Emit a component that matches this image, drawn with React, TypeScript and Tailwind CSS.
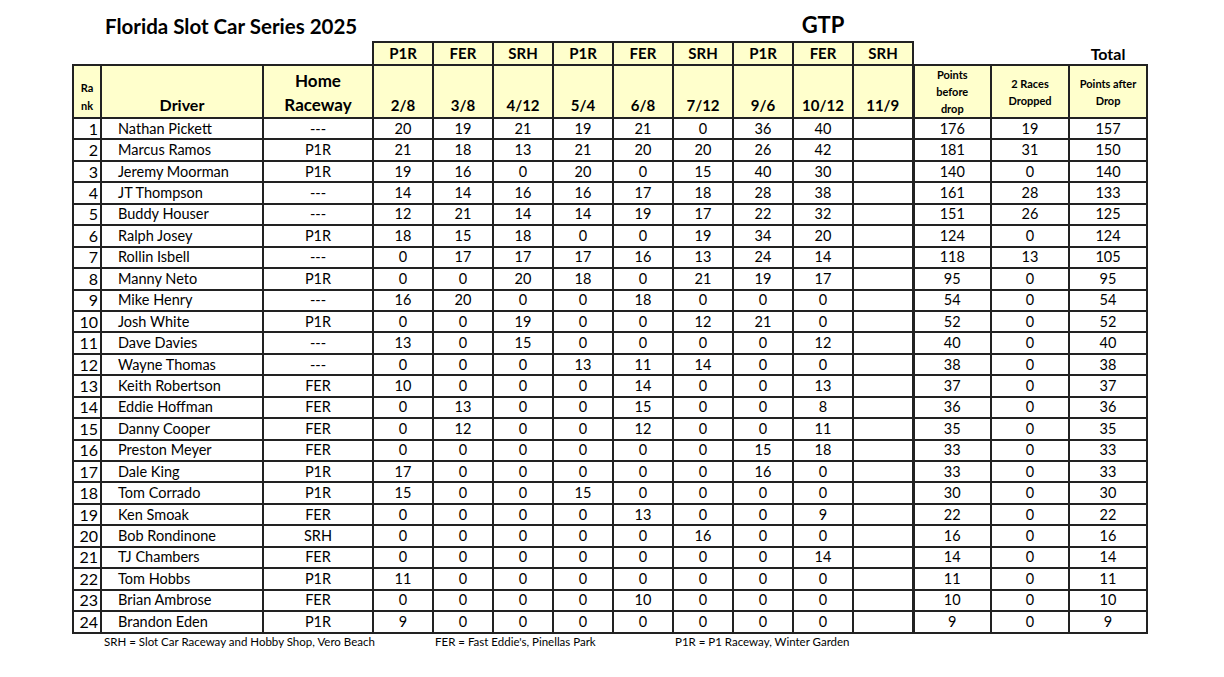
import React from "react";

type Row = [number, string, string, (number | null)[], number, number, number];

const rows: Row[] = [
  [1, "Nathan Pickett", "---", [20, 19, 21, 19, 21, 0, 36, 40, null], 176, 19, 157],
  [2, "Marcus Ramos", "P1R", [21, 18, 13, 21, 20, 20, 26, 42, null], 181, 31, 150],
  [3, "Jeremy Moorman", "P1R", [19, 16, 0, 20, 0, 15, 40, 30, null], 140, 0, 140],
  [4, "JT Thompson", "---", [14, 14, 16, 16, 17, 18, 28, 38, null], 161, 28, 133],
  [5, "Buddy Houser", "---", [12, 21, 14, 14, 19, 17, 22, 32, null], 151, 26, 125],
  [6, "Ralph Josey", "P1R", [18, 15, 18, 0, 0, 19, 34, 20, null], 124, 0, 124],
  [7, "Rollin Isbell", "---", [0, 17, 17, 17, 16, 13, 24, 14, null], 118, 13, 105],
  [8, "Manny Neto", "P1R", [0, 0, 20, 18, 0, 21, 19, 17, null], 95, 0, 95],
  [9, "Mike Henry", "---", [16, 20, 0, 0, 18, 0, 0, 0, null], 54, 0, 54],
  [10, "Josh White", "P1R", [0, 0, 19, 0, 0, 12, 21, 0, null], 52, 0, 52],
  [11, "Dave Davies", "---", [13, 0, 15, 0, 0, 0, 0, 12, null], 40, 0, 40],
  [12, "Wayne Thomas", "---", [0, 0, 0, 13, 11, 14, 0, 0, null], 38, 0, 38],
  [13, "Keith Robertson", "FER", [10, 0, 0, 0, 14, 0, 0, 13, null], 37, 0, 37],
  [14, "Eddie Hoffman", "FER", [0, 13, 0, 0, 15, 0, 0, 8, null], 36, 0, 36],
  [15, "Danny Cooper", "FER", [0, 12, 0, 0, 12, 0, 0, 11, null], 35, 0, 35],
  [16, "Preston Meyer", "FER", [0, 0, 0, 0, 0, 0, 15, 18, null], 33, 0, 33],
  [17, "Dale King", "P1R", [17, 0, 0, 0, 0, 0, 16, 0, null], 33, 0, 33],
  [18, "Tom Corrado", "P1R", [15, 0, 0, 15, 0, 0, 0, 0, null], 30, 0, 30],
  [19, "Ken Smoak", "FER", [0, 0, 0, 0, 13, 0, 0, 9, null], 22, 0, 22],
  [20, "Bob Rondinone", "SRH", [0, 0, 0, 0, 0, 16, 0, 0, null], 16, 0, 16],
  [21, "TJ Chambers", "FER", [0, 0, 0, 0, 0, 0, 0, 14, null], 14, 0, 14],
  [22, "Tom Hobbs", "P1R", [11, 0, 0, 0, 0, 0, 0, 0, null], 11, 0, 11],
  [23, "Brian Ambrose", "FER", [0, 0, 0, 0, 10, 0, 0, 0, null], 10, 0, 10],
  [24, "Brandon Eden", "P1R", [9, 0, 0, 0, 0, 0, 0, 0, null], 9, 0, 9],
];

const venues = ["P1R", "FER", "SRH", "P1R", "FER", "SRH", "P1R", "FER", "SRH"];
const dates = ["2/8", "3/8", "4/12", "5/4", "6/8", "7/12", "9/6", "10/12", "11/9"];

const B = "border-2 border-[#222]";

export default function App() {
  return (
    <div className="w-[1224px] h-[677px] bg-white text-black font-['Lato',sans-serif] overflow-hidden">
      <table className="ml-[72px] w-[1074px] table-fixed border-collapse">
        <colgroup>
          <col className="w-[28px]" />
          <col className="w-[162px]" />
          <col className="w-[110px]" />
          {dates.map((d) => (
            <col key={d} className="w-[60px]" />
          ))}
          <col className="w-[78px]" />
          <col className="w-[78px]" />
          <col className="w-[78px]" />
        </colgroup>
        <tbody>
          <tr className="h-[42px]">
            <td className="p-0" />
            <td colSpan={9} className="p-0 pl-[4px] pb-[3px] align-bottom text-left font-bold text-[20.5px] leading-[24px] whitespace-nowrap">
              Florida Slot Car Series 2025
            </td>
            <td className="p-0 pb-[3px] align-bottom text-center font-bold text-[22px] leading-[26px]">GTP</td>
            <td className="p-0" />
            <td className="p-0" />
            <td className="p-0" />
            <td className="p-0" />
          </tr>
          <tr className="h-[23px]">
            <td className="p-0" />
            <td className="p-0" />
            <td className="p-0" />
            {venues.map((v, i) => (
              <td key={i} className={`${B} p-0 bg-[#ffffcc] text-center font-bold text-[15px] leading-[19px]`}>
                {v}
              </td>
            ))}
            <td className="p-0" />
            <td className="p-0" />
            <td className="p-0 text-center align-bottom font-bold text-[16px] leading-[20px]">Total</td>
          </tr>
          <tr className="h-[52px]">
            <td className={`${B} p-0 pb-[2px] bg-[#ffffcc] align-bottom text-center font-bold text-[11px] leading-[18px]`}>
              Ra
              <br />
              nk
            </td>
            <td className={`${B} p-0 pb-[1px] bg-[#ffffcc] align-bottom text-center font-bold text-[16px] leading-[22px]`}>
              Driver
            </td>
            <td className={`${B} p-0 bg-[#ffffcc] align-bottom text-center font-bold text-[17px] leading-[24px]`}>
              Home
              <br />
              Raceway
            </td>
            {dates.map((d, i) => (
              <td
                key={d}
                className={`${B} ${i === 8 ? "border-r-[3px]" : ""} p-0 pb-[1px] bg-[#ffffcc] align-bottom text-center font-bold text-[15px] leading-[22px]`}
              >
                {d}
              </td>
            ))}
            <td className={`${B} p-0 bg-[#ffffcc] align-middle text-center font-bold text-[11px] leading-[17px]`}>
              Points
              <br />
              before
              <br />
              drop
            </td>
            <td className={`${B} p-0 bg-[#ffffcc] align-middle text-center font-bold text-[11px] leading-[17px]`}>
              2 Races
              <br />
              Dropped
            </td>
            <td className={`${B} p-0 bg-[#ffffcc] align-middle text-center font-bold text-[11px] leading-[17px]`}>
              Points after
              <br />
              Drop
            </td>
          </tr>
          {rows.map(([rank, name, home, races, before, dropped, after]) => (
            <tr key={rank} className="h-[21.45px]">
              <td className={`${B} p-0 pr-[2px] text-right text-[16px] leading-[18px]`}>{rank}</td>
              <td className={`${B} p-0 pl-[16px] text-left text-[14.5px] leading-[18px] whitespace-nowrap`}>{name}</td>
              <td className={`${B} p-0 text-center text-[14.5px] leading-[18px]`}>{home}</td>
              {races.map((r, i) => (
                <td
                  key={i}
                  className={`${B} ${i === 8 ? "border-r-[3px]" : ""} p-0 text-center text-[14.5px] leading-[18px]`}
                >
                  {r === null ? "" : r}
                </td>
              ))}
              <td className={`${B} p-0 text-center text-[14.5px] leading-[18px]`}>{before}</td>
              <td className={`${B} p-0 text-center text-[14.5px] leading-[18px]`}>{dropped}</td>
              <td className={`${B} p-0 text-center text-[14.5px] leading-[18px]`}>{after}</td>
            </tr>
          ))}
        </tbody>
      </table>
      <div className="flex pl-[104px] pt-[1px] text-[11.5px] leading-[14px] whitespace-nowrap">
        <span className="w-[331px]">SRH = Slot Car Raceway and Hobby Shop, Vero Beach</span>
        <span className="w-[240px]">FER = Fast Eddie's, Pinellas Park</span>
        <span>P1R = P1 Raceway, Winter Garden</span>
      </div>
    </div>
  );
}
